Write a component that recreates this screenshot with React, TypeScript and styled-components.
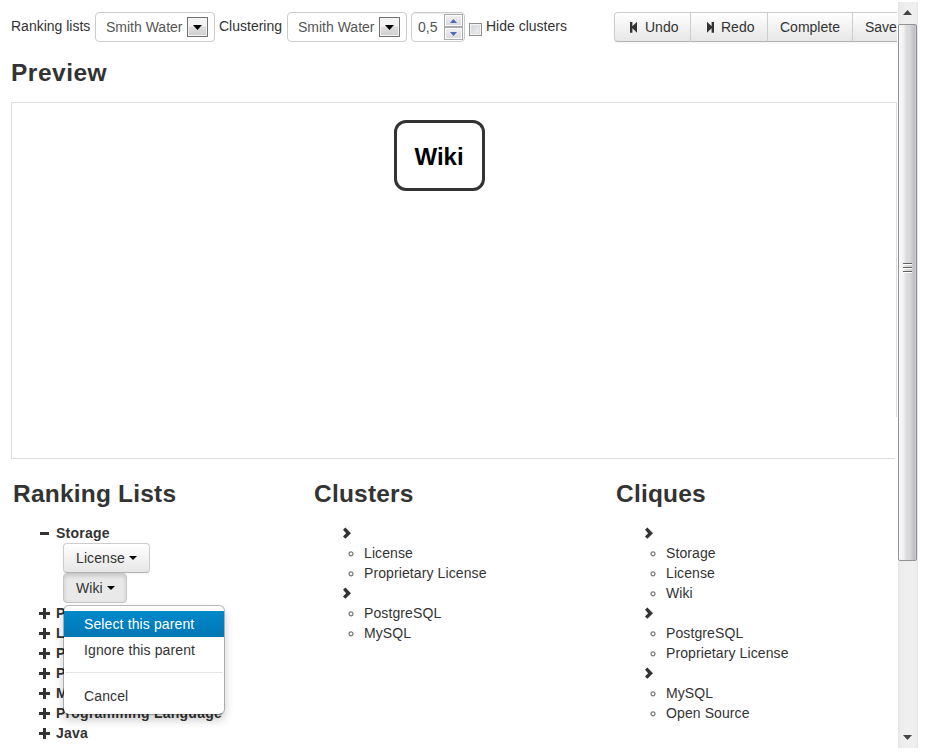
import React from "react";
import styled, { createGlobalStyle, css } from "styled-components";

const GlobalStyle = createGlobalStyle`
  body {
    margin: 0;
    background: #fff;
    color: #333;
    font: 14px/20px "Liberation Sans", Arial, sans-serif;
  }
  *, *::before, *::after { box-sizing: border-box; }
  svg { display: block; flex: none; }
`;

const Window = styled.div`
  display: flex;
  width: 925px;
  height: 754px;
  overflow: hidden;
`;

const Page = styled.main`
  width: 897px;
  height: 754px;
  flex: none;
  overflow: hidden;
`;

const Toolbar = styled.header`
  display: flex;
  align-items: flex-start;
  height: 52px;
  padding: 12px 0 0 11px;
`;

const Label = styled.span<{ $width: number }>`
  flex: none;
  width: ${(p) => p.$width}px;
  padding-top: 4px;
  white-space: nowrap;
`;

const field = css`
  display: flex;
  flex: none;
  height: 30px;
  margin-right: 4px;
  border: 1px solid #ccc;
  border-radius: 4px;
  color: #555;
  white-space: nowrap;
`;

const Select = styled.div`
  ${field}
  width: 120px;
  padding: 4px 6px 4px 10px;
  justify-content: space-between;
`;

const SelectArrow = styled.span`
  display: flex;
  align-items: center;
  justify-content: center;
  width: 21px;
  height: 20px;
  border: 1px solid #707070;
  box-shadow: inset 0 0 0 1px #f4f4f4;
  background: linear-gradient(#f3f3f3 45%, #dedede 50%, #cfcfcf);
`;

const NumberField = styled.div`
  ${field}
  width: 54px;
  padding: 1px 1px 1px 6px;
  justify-content: space-between;
  box-shadow: inset 0 1px 1px rgba(0, 0, 0, 0.075);
`;

const NumberValue = styled.span`
  padding-top: 3px;
`;

const Spinner = styled.span`
  display: flex;
  flex-direction: column;
  width: 19px;
`;

const SpinnerButton = styled.span`
  display: flex;
  align-items: center;
  justify-content: center;
  height: 13px;
  border: 1px solid #aaabb0;
  box-shadow: inset 0 0 0 1px #fafafa;
  background: linear-gradient(#f1f1f1, #d9d9dc);
`;

const Checkbox = styled.span`
  flex: none;
  width: 13px;
  height: 13px;
  margin: 11px 4px 0 0;
  border: 1px solid #8e8f8f;
  box-shadow: inset 0 0 0 1px #f4f4f4, inset 0 0 0 2px #dde0e3;
  background: linear-gradient(135deg, #cbcfd5, #f6f6f6);
`;

const ButtonGroup = styled.div`
  display: flex;
  flex: none;
  border-radius: 4px 0 0 4px;
  box-shadow: 0 1px 2px rgba(0, 0, 0, 0.05);
`;

const button = css`
  display: flex;
  align-items: center;
  height: 30px;
  padding: 0 0 0 12px;
  border: 1px solid #ccc;
  border-bottom-color: #b3b3b3;
  color: #333;
  white-space: nowrap;
  background: linear-gradient(#fff, #e6e6e6);
`;

const ToolButton = styled.div<{ $width: number }>`
  ${button}
  flex: none;
  width: ${(p) => p.$width}px;
  gap: 4px;
  & + & { border-left: 0; }
  &:first-child { border-radius: 4px 0 0 4px; }
`;

const Heading = styled.h3`
  height: 40px;
  margin: 0;
  font-size: 24.5px;
  line-height: 42px;
  letter-spacing: 0.2px;
  white-space: nowrap;
`;

const PreviewHeading = styled(Heading)`
  padding-left: 11px;
  letter-spacing: 0.5px;
`;

/* The right rule stops short of the bottom one, so each edge is its own layer. */
const Canvas = styled.section`
  display: flex;
  justify-content: center;
  align-items: flex-start;
  width: 886px;
  height: 357px;
  margin: 10px 0 0 11px;
  padding: 18px 30px 0 0;
  background:
    linear-gradient(#ddd, #ddd) 0 0 / 886px 1px no-repeat,
    linear-gradient(#ddd, #ddd) 0 0 / 1px 357px no-repeat,
    linear-gradient(#ddd, #ddd) 885px 0 / 1px 315px no-repeat,
    linear-gradient(#ddd, #ddd) 0 356px / 884px 1px no-repeat;
`;

const Node = styled.div`
  display: flex;
  align-items: center;
  justify-content: center;
  width: 91px;
  height: 71px;
  padding-top: 2px;
  border: 3px solid #333;
  border-radius: 12px;
  color: #000;
  font-size: 24px;
  font-weight: bold;
`;

const Columns = styled.section`
  display: grid;
  grid-template-columns: 301px 302px 281px;
  padding: 14px 0 0 13px;
`;

const List = styled.ul`
  margin: 10px 0 0;
  padding: 0;
  list-style: none;
`;

const Row = styled.li`
  display: flex;
  align-items: center;
  height: 20px;
  white-space: nowrap;
`;

const TreeRow = styled(Row)`
  padding-left: 26px;
  font-weight: bold;
  letter-spacing: 0.25px;
  gap: 6px;
`;

const GroupRow = styled(Row)`
  padding-left: 27px;
`;

const ItemRow = styled(Row)`
  padding-left: 33px;
  letter-spacing: 0.1px;
  gap: 9px;
`;

const DropdownRow = styled.li`
  position: relative;
  display: flex;
  padding-left: 50px;
`;

const DropButton = styled.div<{ $width: number; $active?: boolean }>`
  ${button}
  width: ${(p) => p.$width}px;
  gap: 4px;
  letter-spacing: 0.1px;
  border-radius: 4px;
  box-shadow: 0 1px 2px rgba(0, 0, 0, 0.05);
  ${(p) =>
    p.$active &&
    css`
      background: #e9e9e9;
      border-color: #c6c6c6;
      box-shadow: inset 0 2px 4px rgba(0, 0, 0, 0.15);
    `}
`;

const Menu = styled.div`
  position: absolute;
  top: 32px;
  left: 50px;
  z-index: 1;
  width: 162px;
  height: 110px;
  padding: 5px 0;
  border: 1px solid rgba(0, 0, 0, 0.25);
  border-radius: 6px;
  background: #fff;
  background-clip: padding-box;
  box-shadow: 0 5px 10px rgba(0, 0, 0, 0.2);
`;

const MenuItem = styled.div<{ $selected?: boolean }>`
  height: 26px;
  padding: 3px 20px;
  letter-spacing: 0.12px;
  white-space: nowrap;
  ${(p) =>
    p.$selected &&
    css`
      color: #fff;
      background: linear-gradient(#0088cc, #0077b3);
    `}
`;

const Divider = styled.div`
  height: 2px;
  margin: 9px 1px;
  border-top: 1px solid #e5e5e5;
`;

const ScrollBar = styled.aside`
  display: flex;
  flex-direction: column;
  width: 21px;
  height: 746px;
  margin-top: 2px;
  background: linear-gradient(90deg, #fff 1px, #e4e4e4 1px, #ebebeb 3px, #efefef 9px, #efefef 19px, #e3e3e3);
`;

const ScrollEnd = styled.div<{ $bottom?: boolean }>`
  display: flex;
  flex: none;
  align-items: center;
  justify-content: center;
  height: 22px;
  margin-top: ${(p) => (p.$bottom ? "auto" : "0")};
  padding-bottom: ${(p) => (p.$bottom ? "0" : "1px")};
`;

const Thumb = styled.div`
  display: flex;
  flex: none;
  justify-content: center;
  width: 19px;
  height: 537px;
  margin-left: 1px;
  padding-top: 238px;
  border: 1px solid #929294;
  border-radius: 2px;
  background: linear-gradient(90deg, #fafafa 0, #efeff0 5px, #dcdcde 7px, #d8d8da 11px, #c5c5ca 14px, #bdbdc3 16px, #d6d6d8);
`;

const Triangle = ({ w, h, color = "#000", up = false }: { w: number; h: number; color?: string; up?: boolean }) => (
  <svg width={w} height={h} viewBox="0 0 10 6" preserveAspectRatio="none">
    <path d={up ? "M0 6 5 0l5 6Z" : "M0 0h10L5 6Z"} fill={color} />
  </svg>
);

const StepIcon = ({ forward = false }: { forward?: boolean }) => (
  <svg width="14" height="14" viewBox="0 0 14 14">
    <g fill="#333" transform={forward ? "translate(14 0) scale(-1 1)" : undefined}>
      <path d="M3 2h2.4v4.3L10 1.8v10.9L5.4 8.2v4.5H3Z" />
    </g>
  </svg>
);

const Plus = () => (
  <svg width="11" height="12" viewBox="0 0 11 12">
    <path d="M4 1h3v4h4v3H7v4H4V8H0V5h4Z" fill="#333" />
  </svg>
);

const Minus = () => (
  <svg width="11" height="12" viewBox="0 0 11 12">
    <path d="M1 5h9v3H1Z" fill="#333" />
  </svg>
);

const Chevron = () => (
  <svg width="12" height="14" viewBox="0 0 12 14">
    <path d="M2 3.8 4.4 1.4 10 7.2l-5.6 5.6L2 10.4l3.1-3.2Z" fill="#333" />
  </svg>
);

const Ring = () => (
  <svg width="8" height="8" viewBox="0 0 8 8">
    <circle cx="4" cy="4.8" r="2" fill="none" stroke="#777" strokeWidth="1.2" />
  </svg>
);

const Grip = () => (
  <svg width="9" height="12" viewBox="0 0 9 12" shapeRendering="crispEdges">
    <path d="M0 1.5h9M0 5.5h9M0 9.5h9" stroke="#fff" />
    <path d="M0 .5h9M0 4.5h9M0 8.5h9" stroke="#606060" />
  </svg>
);

const collapsed = ["P", "L", "P", "P", "M", "Programming Language", "Java"];
const clusters = [
  ["License", "Proprietary License"],
  ["PostgreSQL", "MySQL"],
];
const cliques = [
  ["Storage", "License", "Wiki"],
  ["PostgreSQL", "Proprietary License"],
  ["MySQL", "Open Source"],
];

const Algorithm = () => (
  <Select>
    <span>Smith Water</span>
    <SelectArrow>
      <Triangle w={9} h={5} />
    </SelectArrow>
  </Select>
);

const Groups = ({ title, groups }: { title: string; groups: string[][] }) => (
  <div>
    <Heading>{title}</Heading>
    <List>
      {groups.map((items, i) => (
        <React.Fragment key={i}>
          <GroupRow>
            <Chevron />
          </GroupRow>
          {items.map((item) => (
            <ItemRow key={item}>
              <Ring />
              {item}
            </ItemRow>
          ))}
        </React.Fragment>
      ))}
    </List>
  </div>
);

export default function App() {
  return (
    <Window>
      <GlobalStyle />
      <Page>
        <Toolbar>
          <Label $width={84}>Ranking lists</Label>
          <Algorithm />
          <Label $width={68}>Clustering</Label>
          <Algorithm />
          <NumberField>
            <NumberValue>0,5</NumberValue>
            <Spinner>
              <SpinnerButton>
                <Triangle w={7} h={4} color="#5068b8" up />
              </SpinnerButton>
              <SpinnerButton>
                <Triangle w={7} h={4} color="#5068b8" />
              </SpinnerButton>
            </Spinner>
          </NumberField>
          <Checkbox />
          <Label $width={128}>Hide clusters</Label>
          <ButtonGroup>
            <ToolButton $width={77}>
              <StepIcon />
              Undo
            </ToolButton>
            <ToolButton $width={77}>
              <StepIcon forward />
              Redo
            </ToolButton>
            <ToolButton $width={85}>Complete</ToolButton>
            <ToolButton $width={60}>Save</ToolButton>
          </ButtonGroup>
        </Toolbar>
        <PreviewHeading>Preview</PreviewHeading>
        <Canvas>
          <Node>Wiki</Node>
        </Canvas>
        <Columns>
          <div>
            <Heading>Ranking Lists</Heading>
            <List>
              <TreeRow>
                <Minus />
                Storage
              </TreeRow>
              <DropdownRow>
                <DropButton $width={87}>
                  License
                  <Triangle w={8} h={4} />
                </DropButton>
              </DropdownRow>
              <DropdownRow>
                <DropButton $width={64} $active>
                  Wiki
                  <Triangle w={8} h={4} />
                </DropButton>
                <Menu>
                  <MenuItem $selected>Select this parent</MenuItem>
                  <MenuItem>Ignore this parent</MenuItem>
                  <Divider />
                  <MenuItem>Cancel</MenuItem>
                </Menu>
              </DropdownRow>
              {collapsed.map((name, i) => (
                <TreeRow key={i}>
                  <Plus />
                  {name}
                </TreeRow>
              ))}
            </List>
          </div>
          <Groups title="Clusters" groups={clusters} />
          <Groups title="Cliques" groups={cliques} />
        </Columns>
      </Page>
      <ScrollBar>
        <ScrollEnd>
          <Triangle w={9} h={5} color="#444" up />
        </ScrollEnd>
        <Thumb>
          <Grip />
        </Thumb>
        <ScrollEnd $bottom>
          <Triangle w={9} h={5} color="#444" />
        </ScrollEnd>
      </ScrollBar>
    </Window>
  );
}
